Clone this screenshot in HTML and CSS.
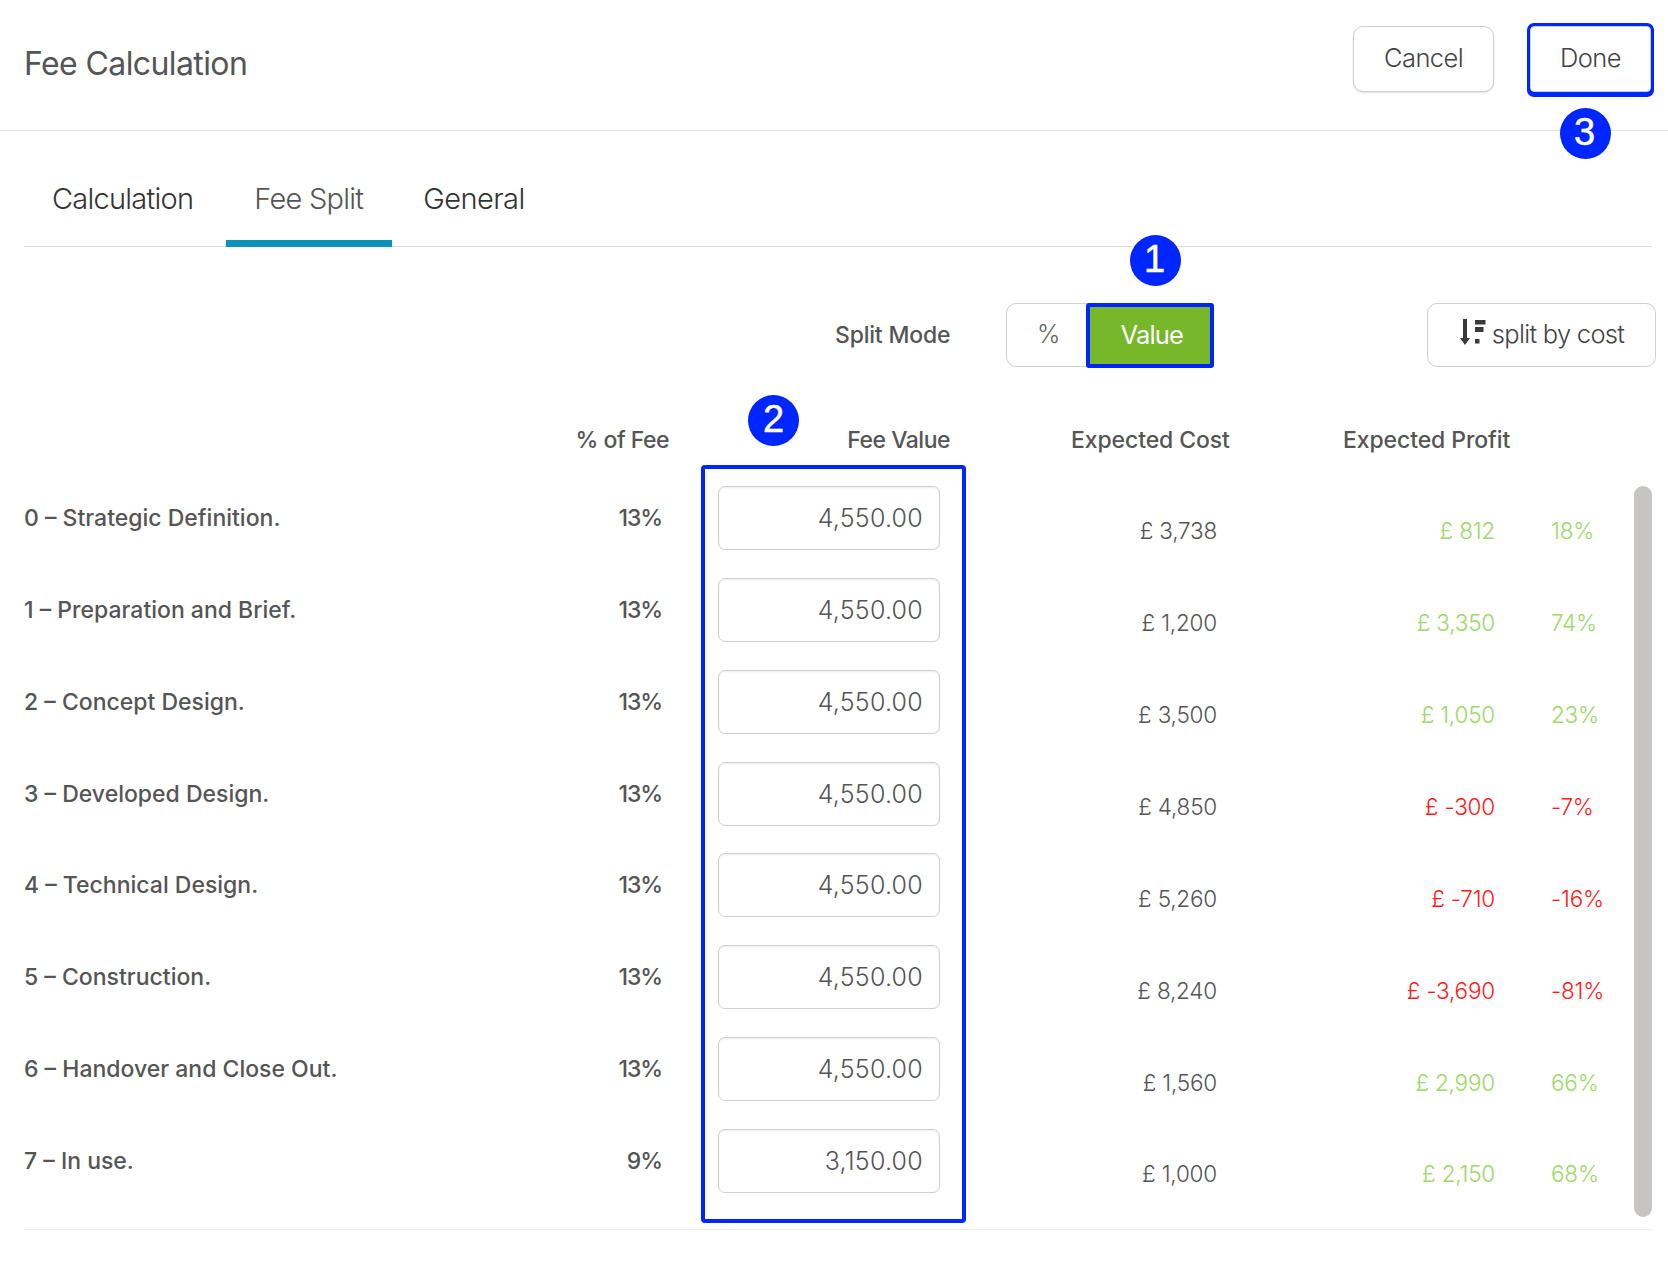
FILE: index.html
```html
<!DOCTYPE html>
<html lang="en">
<head>
<meta charset="utf-8">
<title>Fee Calculation</title>
<link rel="stylesheet" href="styles.css">
</head>
<body>
<div class="page">
  <header class="topbar">
    <h1 class="title">Fee Calculation</h1>
    <div class="actions">
      <button class="btn btn-cancel">Cancel</button>
      <button class="btn btn-done">Done</button>
    </div>
  </header>
  <nav class="tabs">
    <a class="tab">Calculation</a>
    <a class="tab tab-active">Fee Split</a>
    <a class="tab">General</a>
  </nav>
  <section class="toolbar">
    <span class="mode-label">Split Mode</span>
    <div class="toggle">
      <span class="toggle-pct">%</span>
      <span class="toggle-value">Value</span>
    </div>
    <button class="split-btn">
      <svg class="split-icon" width="26" height="26" viewBox="0 0 26 26" aria-hidden="true">
        <path d="M3 0h4v19h3l-5 7-5-7h3z" fill="#3a3a3a"/>
        <rect x="15" y="1" width="10.5" height="4.5" fill="#3a3a3a"/>
        <rect x="15" y="8" width="8.5" height="5" fill="#3a3a3a"/>
        <rect x="15" y="20" width="4.5" height="4.5" fill="#3a3a3a"/>
      </svg>
      <span>split by cost</span>
    </button>
  </section>
  <div class="thead">
    <span class="th th-pct">% of Fee</span>
    <span class="th th-fee">Fee Value</span>
    <span class="th th-cost">Expected Cost</span>
    <span class="th th-profit">Expected Profit</span>
  </div>
  <div class="body">
    <div class="rows">
      <div class="row"><span class="name">0 – Strategic Definition.</span><span class="pct">13%</span><input class="fee" value="4,550.00"><span class="cost">£ 3,738</span><span class="profit pos">£ 812</span><span class="margin pos">18%</span></div>
      <div class="row"><span class="name">1 – Preparation and Brief.</span><span class="pct">13%</span><input class="fee" value="4,550.00"><span class="cost">£ 1,200</span><span class="profit pos">£ 3,350</span><span class="margin pos">74%</span></div>
      <div class="row"><span class="name">2 – Concept Design.</span><span class="pct">13%</span><input class="fee" value="4,550.00"><span class="cost">£ 3,500</span><span class="profit pos">£ 1,050</span><span class="margin pos">23%</span></div>
      <div class="row"><span class="name">3 – Developed Design.</span><span class="pct">13%</span><input class="fee" value="4,550.00"><span class="cost">£ 4,850</span><span class="profit neg">£ -300</span><span class="margin neg">-7%</span></div>
      <div class="row"><span class="name">4 – Technical Design.</span><span class="pct">13%</span><input class="fee" value="4,550.00"><span class="cost">£ 5,260</span><span class="profit neg">£ -710</span><span class="margin neg">-16%</span></div>
      <div class="row"><span class="name">5 – Construction.</span><span class="pct">13%</span><input class="fee" value="4,550.00"><span class="cost">£ 8,240</span><span class="profit neg">£ -3,690</span><span class="margin neg">-81%</span></div>
      <div class="row"><span class="name">6 – Handover and Close Out.</span><span class="pct">13%</span><input class="fee" value="4,550.00"><span class="cost">£ 1,560</span><span class="profit pos">£ 2,990</span><span class="margin pos">66%</span></div>
      <div class="row"><span class="name">7 – In use.</span><span class="pct">9%</span><input class="fee" value="3,150.00"><span class="cost">£ 1,000</span><span class="profit pos">£ 2,150</span><span class="margin pos">68%</span></div>
    </div>
    <div class="scrollbar"></div>
  </div>
  <div class="highlight"></div>
  <span class="badge badge-1">1</span>
  <span class="badge badge-2">2</span>
  <span class="badge badge-3">3</span>
</div>
</body>
</html>
```

FILE: styles.css
```css
* { box-sizing: border-box; }
html, body { margin: 0; padding: 0; background: #fff; }
body { font-family: Inter, "Liberation Sans", sans-serif; color: #555; }
.page { position: relative; width: 1668px; height: 1275px; overflow: hidden; }

.topbar { height: 131px; border-bottom: 1px solid #e3e3e3; display: flex; justify-content: space-between; padding: 26px 17px 0 24px; }
.title { margin: 18px 0 0; font-size: 32px; line-height: 40px; font-weight: 400; color: #555; letter-spacing: -0.6px; }
.actions { display: flex; gap: 36px; height: 66px; }
.btn { height: 66px; padding: 0 0 4px; background: #fff; border: 1px solid #cfcfcf; border-radius: 10px; font: 300 25.5px Inter, sans-serif; color: #444; letter-spacing: -0.6px; box-shadow: 0 1px 2px rgba(0,0,0,.12); }
.btn-cancel { width: 141px; }
.btn-done { width: 121px; outline: 3px solid #0026ff; outline-offset: 0; border-radius: 4px; box-shadow: 0 2px 0 3px #0026ff; }

.tabs { height: 116px; margin: 0 16px 0 24px; border-bottom: 1px solid #dedede; display: flex; align-items: flex-end; padding-left: 0; }
.tab { height: 116px; margin-bottom: -1px; padding: 50px 28px 0; font-size: 29px; line-height: 36px; font-weight: 300; color: #333; letter-spacing: -0.75px; }
.tab-active { color: #555; padding: 50px 29px 0 28px; border-bottom: 7px solid #0a93b7; margin: 0 0 -1px 5px; }
.tab:last-child { margin-left: 3px; letter-spacing: -0.55px; }

.toolbar { display: flex; align-items: center; height: 64px; margin-top: 56px; padding-left: 835px; }
.mode-label { width: 115px; font-size: 23px; font-weight: 500; letter-spacing: -0.2px; white-space: nowrap; }
.toggle { display: flex; width: 208px; height: 64px; margin-left: 56px; border: 1px solid #cfcfcf; border-radius: 10px; }
.toggle-pct { width: 79px; padding: 0 0 2px 5px; display: flex; align-items: center; justify-content: center; font-size: 25px; font-weight: 300; color: #666; }
.toggle-value { width: 129px; height: 65px; margin: -1px -1px 0 0; padding: 0 0 3px 4px; background: #76b82a; border: 4px solid #0026ff; border-radius: 3px; color: #fff; font-size: 25.5px; font-weight: 400; letter-spacing: -0.8px; display: flex; align-items: center; justify-content: center; }
.split-btn { width: 229px; height: 64px; margin-left: 213px; padding: 0 0 3px; background: #fff; border: 1px solid #cfcfcf; border-radius: 10px; display: flex; align-items: center; justify-content: center; gap: 6px; font: 300 25.5px Inter, sans-serif; color: #444; letter-spacing: -0.7px; }
.split-icon { margin: -3px 0 0 1px; }

.thead { display: flex; height: 105px; padding-top: 56px; font-size: 23px; font-weight: 500; line-height: 34px; letter-spacing: -0.5px; }
.th { display: block; white-space: nowrap; }
.th-pct { width: 669px; text-align: right; }
.th-fee { width: 281px; text-align: right; }
.th-cost { width: 159px; margin-left: 121px; letter-spacing: -0.1px; }
.th-profit { width: 168px; margin-left: 113px; letter-spacing: -0.1px; }

.body { display: flex; margin-left: 24px; width: 1628px; border-bottom: 1px solid #ededed; height: 758px; }
.rows { width: 1610px; }
.row { display: grid; grid-template-columns: 560px 78px 56px 222px 277px 278px 56px auto; height: 91.86px; align-items: center; font-size: 23px; }
.name { font-weight: 500; letter-spacing: 0; white-space: nowrap; }
.pct { grid-column: 2; text-align: right; font-weight: 500; letter-spacing: -1.1px; }
.fee { grid-column: 4; width: 222px; height: 64px; border: 1px solid #cfcfcf; border-radius: 7px; padding: 0 16px 0 0; text-align: right; font: 300 25px Inter, sans-serif; color: #555; background: #fff; box-shadow: inset 0 1px 2px rgba(0,0,0,.08); letter-spacing: 0.25px; }
.cost, .profit, .margin { margin-top: 26px; font-weight: 300; font-size: 22.5px; letter-spacing: -0.2px; }
.cost { grid-column: 5; text-align: right; color: #555; }
.profit { grid-column: 6; text-align: right; }
.margin { grid-column: 8; }
.pos { color: #9bd968; }
.neg { color: #ff1a1a; }
.scrollbar { width: 18px; height: 731px; margin-top: 14px; background: #c6c5c3; border-radius: 9px; }

.highlight { position: absolute; left: 701px; top: 465px; width: 265px; height: 758px; border: 4px solid #0026ff; border-radius: 4px; }
.badge { position: absolute; width: 51px; height: 51px; border-radius: 50%; background: #0026ff; color: #fff; font: 400 38px/49px "Liberation Sans", sans-serif; text-align: center; -webkit-text-stroke: 0.5px #fff; }
.badge-1 { left: 1130px; top: 235px; text-indent: -2px; }
.badge-2 { left: 748px; top: 395px; }
.badge-3 { left: 1560px; top: 108px; text-indent: -2px; }
```
